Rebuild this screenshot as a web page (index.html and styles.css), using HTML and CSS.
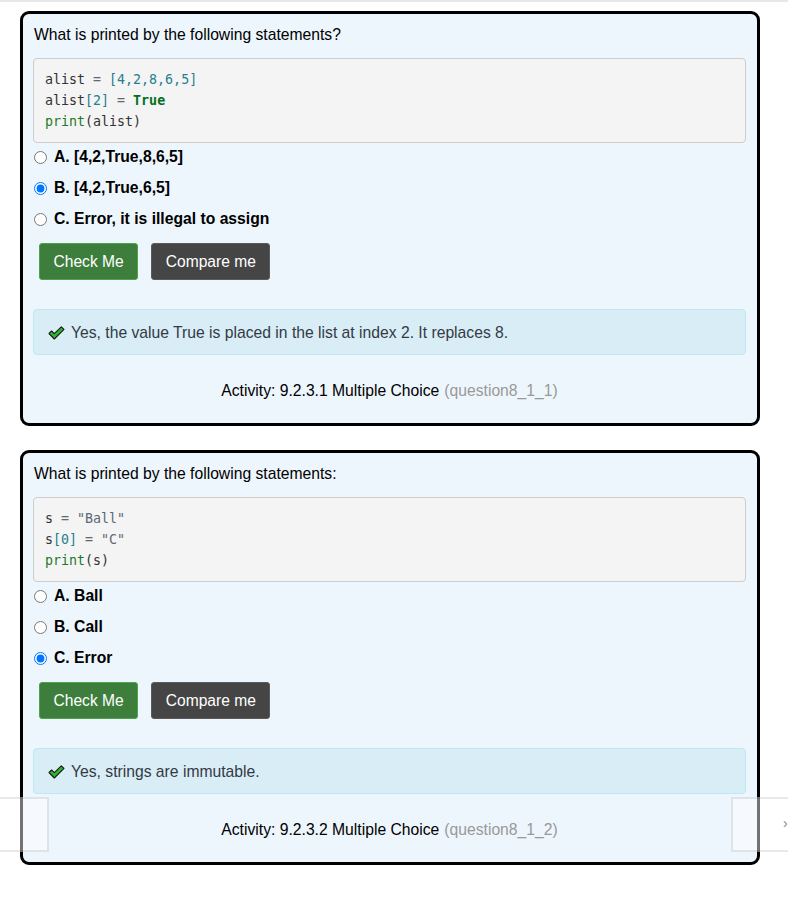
FILE: index.html
```html
<!DOCTYPE html>
<html>
<head>
<meta charset="utf-8">
<link rel="stylesheet" href="styles.css">
</head>
<body>
<div class="topline"></div>
<main class="page">
  <section class="card">
    <p class="question">What is printed by the following statements?</p>
    <pre class="code"><span class="n">alist</span> <span class="o">=</span> <span class="m">[4,2,8,6,5]</span>
<span class="n">alist</span><span class="m">[2]</span> <span class="o">=</span> <span class="k">True</span>
<span class="b">print</span><span class="n">(alist)</span></pre>
    <div class="options">
      <label class="opt"><input type="radio" name="q1"><span>A. [4,2,True,8,6,5]</span></label>
      <label class="opt"><input type="radio" name="q1" checked><span>B. [4,2,True,6,5]</span></label>
      <label class="opt"><input type="radio" name="q1"><span>C. Error, it is illegal to assign</span></label>
    </div>
    <div class="buttons">
      <button class="btn btn-check">Check Me</button>
      <button class="btn btn-compare">Compare me</button>
    </div>
    <div class="feedback">
      <svg class="ok" width="17" height="14" viewBox="0 0 17 14"><path d="M1 7.5 L3.6 5 L6.3 7.6 L13.3 0.8 L16 3.4 L6.3 13 Z" fill="#2fb52f" stroke="#1a1a1a" stroke-width="1.1" stroke-linejoin="round"/></svg>
      <span>Yes, the value True is placed in the list at index 2. It replaces 8.</span>
    </div>
    <div class="activity">Activity: 9.2.3.1 Multiple Choice <span class="qid">(question8_1_1)</span></div>
  </section>

  <section class="card">
    <p class="question">What is printed by the following statements:</p>
    <pre class="code"><span class="n">s</span> <span class="o">=</span> <span class="s">"Ball"</span>
<span class="n">s</span><span class="m">[0]</span> <span class="o">=</span> <span class="s">"C"</span>
<span class="b">print</span><span class="n">(s)</span></pre>
    <div class="options">
      <label class="opt"><input type="radio" name="q2"><span>A. Ball</span></label>
      <label class="opt"><input type="radio" name="q2"><span>B. Call</span></label>
      <label class="opt"><input type="radio" name="q2" checked><span>C. Error</span></label>
    </div>
    <div class="buttons">
      <button class="btn btn-check">Check Me</button>
      <button class="btn btn-compare">Compare me</button>
    </div>
    <div class="feedback">
      <svg class="ok" width="17" height="14" viewBox="0 0 17 14"><path d="M1 7.5 L3.6 5 L6.3 7.6 L13.3 0.8 L16 3.4 L6.3 13 Z" fill="#2fb52f" stroke="#1a1a1a" stroke-width="1.1" stroke-linejoin="round"/></svg>
      <span>Yes, strings are immutable.</span>
    </div>
    <div class="activity">Activity: 9.2.3.2 Multiple Choice <span class="qid">(question8_1_2)</span></div>
  </section>
</main>
<nav class="pager">
  <div class="pager-btn pager-prev"></div>
  <div class="pager-btn pager-next"><span class="pager-glyph">›</span></div>
</nav>
</body>
</html>
```
FILE: styles.css
```css
html, body {
  margin: 0;
  padding: 0;
  background: #ffffff;
}
body {
  font-family: "Liberation Sans", Arial, sans-serif;
  font-size: 15.7px;
  color: #000;
  width: 788px;
  height: 908px;
  overflow: hidden;
  position: relative;
}
.topline {
  height: 2px;
  background: #e7e7e7;
}
.page {
  padding: 9px 28px 0 20px;
  display: flex;
  flex-direction: column;
  gap: 24px;
}
.card {
  box-sizing: border-box;
  width: 740px;
  height: 415px;
  border: 3px solid #000;
  border-radius: 9px;
  background: #eef6fd;
  padding: 10px 11px 0 10px;
  display: flex;
  flex-direction: column;
}
.question {
  margin: 0 0 12px 1px;
  line-height: 22px;
  font-size: 15.7px;
}
.code {
  margin: 0;
  padding: 10px 11px;
  background: #f4f4f4;
  border: 1px solid #cccccc;
  border-radius: 4px;
  font-family: "DejaVu Sans Mono", monospace;
  font-size: 13.3px;
  line-height: 21px;
  color: #333;
}
.code .n { color: #333; }
.code .o { color: #666; }
.code .m { color: #267f8c; }
.code .k { color: #007020; font-weight: bold; }
.code .b { color: #1b7a2a; }
.code .s { color: #5a6877; }
.options {
  margin-top: 1px;
  display: flex;
  flex-direction: column;
  gap: 5px;
}
.opt {
  height: 26px;
  display: flex;
  align-items: center;
  gap: 7px;
  font-weight: bold;
  font-size: 15.7px;
}
.opt input {
  margin: 0 0 0 1px;
  width: 13px;
  height: 13px;
}
.buttons {
  margin-top: 11px;
  display: flex;
  gap: 13px;
  padding-left: 6px;
}
.btn {
  font-family: "Liberation Sans", Arial, sans-serif;
  font-size: 15.6px;
  line-height: 19px;
  padding: 8px 13.5px;
  color: #fff;
  border-radius: 3px;
  cursor: pointer;
}
.btn-check {
  background: #3e7e3d;
  border: 1px solid #4da24b;
}
.btn-compare {
  background: #454545;
  border: 1px solid #5a5a5a;
}
.feedback {
  margin-top: 29px;
  box-sizing: border-box;
  height: 46px;
  background: #d9edf7;
  border: 1px solid #bce8f1;
  border-radius: 4px;
  display: flex;
  align-items: center;
  gap: 6px;
  padding-left: 14px;
  padding-top: 1px;
  color: #333a44;
  font-size: 15.7px;
}
.ok { flex: none; margin-top: 0; }
.activity {
  flex: 1;
  display: flex;
  align-items: center;
  justify-content: center;
  font-size: 15.7px;
  color: #000;
  gap: 5px;
  padding-top: 3px;
}
.qid { color: #999; }
.pager {
  position: absolute;
  left: 0;
  right: 0;
  top: 797px;
  height: 55px;
}
.pager-btn {
  position: absolute;
  top: 0;
  box-sizing: border-box;
  height: 55px;
  background: rgba(255, 255, 255, 0.45);
  border: 2px solid rgba(0, 0, 0, 0.09);
  overflow: hidden;
}
.pager-prev {
  left: -20px;
  width: 69px;
}
.pager-next {
  left: 731px;
  width: 80px;
}
.pager-glyph {
  position: absolute;
  left: 50px;
  top: 16px;
  color: #888;
  font-size: 14px;
}
```
